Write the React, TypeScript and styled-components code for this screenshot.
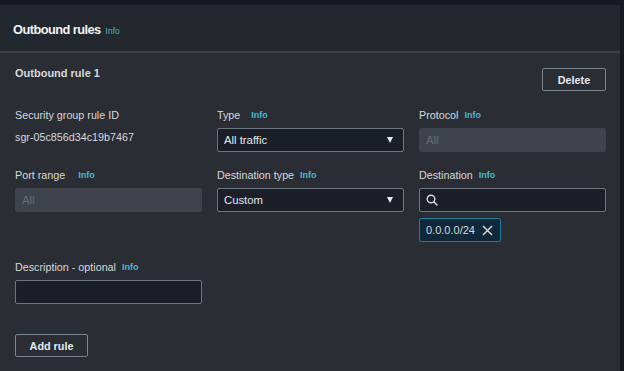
import { FC, ReactNode } from 'react'
import styled, { createGlobalStyle } from 'styled-components'

/*
 * Colours
 */

const Colors = {
    PAGE: '#161921',
    HEADER: '#23272e',
    BODY: '#2a2d33',
    SEPARATOR: '#3d4148',
    TEXT: '#d6d9dc',
    INFO: '#44b9d6',
    INPUT: '#1a1f28',
    INPUT_BORDER: '#6e7780',
    DISABLED: '#3f444c',
    DISABLED_TEXT: '#676d75',
    BUTTON_BORDER: '#7a848f',
    TOKEN: '#10283a',
    TOKEN_BORDER: '#1f7d9e',
}

/*
 * Styles
 */

const GlobalStyle = createGlobalStyle`
    html, body {
        margin: 0;
        padding: 0;
        background: ${Colors.PAGE};
    }
    body {
        font-family: "Liberation Sans", Arial, sans-serif;
        color: ${Colors.TEXT};
    }
`

const Page = styled.div`
    width: 624px;
    height: 371px;
    padding-top: 5px;
    box-sizing: border-box;
    display: flex;
    overflow: hidden;
`

const Panel = styled.div`
    width: 620px;
    display: flex;
    flex-direction: column;
    background: ${Colors.BODY};
`

const Header = styled.div`
    height: 46px;
    padding: 0 13px;
    display: flex;
    align-items: center;
    gap: 5px;
    background: ${Colors.HEADER};
    border-bottom: 2px solid ${Colors.SEPARATOR};
`

const Title = styled.h2`
    margin: 0;
    font-size: 12.8px;
    font-weight: 700;
    letter-spacing: -0.55px;
    color: #f2f3f3;
    padding-top: 2px;
`

const HeaderInfo = styled.span`
    font-size: 8.5px;
    color: ${Colors.INFO};
    padding-top: 5px;
`

const Body = styled.div`
    padding: 12px 14px 0 15px;
    display: flex;
    flex-direction: column;
`

const RuleHeader = styled.div`
    display: flex;
    justify-content: space-between;
    align-items: flex-start;
    margin-bottom: 17px;
`

const RuleTitle = styled.h3`
    margin: 0;
    font-size: 11px;
    font-weight: 700;
    line-height: 16px;
`

const Button = styled.button<{ $width: number; $top?: number }>`
    width: ${(p) => p.$width}px;
    height: 23px;
    margin-top: ${(p) => p.$top ?? 0}px;
    padding: 0;
    background: transparent;
    border: 1px solid ${Colors.BUTTON_BORDER};
    border-radius: 2px;
    color: #e6e9ec;
    font-family: "Liberation Sans", Arial, sans-serif;
    font-size: 10.8px;
    font-weight: 700;
`

const Grid = styled.div`
    display: grid;
    grid-template-columns: repeat(3, 187px);
    column-gap: 15px;
    row-gap: 16px;
    align-items: start;
`

const Field = styled.div`
    display: flex;
    flex-direction: column;
`

const LabelRow = styled.div<{ $gap: number }>`
    height: 14px;
    display: flex;
    align-items: center;
    gap: ${(p) => p.$gap}px;
    margin-bottom: 6px;
`

const Label = styled.span`
    font-size: 10.75px;
`

const Info = styled.span`
    font-size: 9px;
    font-weight: 700;
    color: ${Colors.INFO};
`

const Value = styled.div`
    font-size: 10.75px;
    line-height: 14px;
    margin-top: 2px;
`

const Box = styled.div<{ $disabled?: boolean }>`
    height: 24px;
    box-sizing: border-box;
    padding: 0 6px;
    display: flex;
    align-items: center;
    gap: 6px;
    font-size: 11.3px;
    border-radius: 2px;
    background: ${(p) => (p.$disabled ? Colors.DISABLED : Colors.INPUT)};
    border: 1px solid ${(p) => (p.$disabled ? Colors.DISABLED : Colors.INPUT_BORDER)};
    color: ${(p) => (p.$disabled ? Colors.DISABLED_TEXT : '#e3e6e8')};
`

const BoxText = styled.span`
    flex: 1;
`

const Caret = styled.span`
    width: 0;
    height: 0;
    margin-right: 4px;
    border-left: 3.5px solid transparent;
    border-right: 3.5px solid transparent;
    border-top: 6px solid #e8eaec;
`

const Token = styled.div`
    margin: 6px 0 2px;
    align-self: flex-start;
    height: 24px;
    box-sizing: border-box;
    padding: 0 7px 0 6px;
    display: flex;
    align-items: center;
    gap: 7px;
    font-size: 11px;
    background: ${Colors.TOKEN};
    border: 1px solid ${Colors.TOKEN_BORDER};
    border-radius: 2px;
`

/*
 * Parts
 */

type FieldLabelProps = {
    text: string
    gap?: number
}

const FieldLabel: FC<FieldLabelProps> = ({ text, gap = 6 }) => (
    <LabelRow $gap={gap}>
        <Label>{text}</Label>
        <Info>Info</Info>
    </LabelRow>
)

const SelectBox: FC<{ value: string }> = ({ value }) => (
    <Box>
        <BoxText>{value}</BoxText>
        <Caret />
    </Box>
)

const SearchIcon = () => (
    <svg width="12" height="12" viewBox="0 0 12 12" fill="none">
        <circle cx="5" cy="5" r="3.8" stroke="#d6d9dc" strokeWidth="1.4" />
        <path d="M7.8 7.8L11 11" stroke="#d6d9dc" strokeWidth="1.5" strokeLinecap="round" />
    </svg>
)

const CloseIcon = () => (
    <svg width="11" height="11" viewBox="0 0 11 11" fill="none">
        <path d="M1 1L10 10M10 1L1 10" stroke="#d6d9dc" strokeWidth="1.5" />
    </svg>
)

type FieldProps = { children: ReactNode }
const Column: FC<FieldProps> = ({ children }) => <Field>{children}</Field>

/*
 * App
 */

const App: FC = () => {
    return (
        <>
            <GlobalStyle />
            <Page>
                <Panel>
                    <Header>
                        <Title>Outbound rules</Title>
                        <HeaderInfo>Info</HeaderInfo>
                    </Header>
                    <Body>
                        <RuleHeader>
                            <RuleTitle>Outbound rule 1</RuleTitle>
                            <Button $width={64} $top={3}>
                                Delete
                            </Button>
                        </RuleHeader>
                        <Grid>
                            <Field>
                                <LabelRow $gap={6}>
                                    <Label>Security group rule ID</Label>
                                </LabelRow>
                                <Value>sgr-05c856d34c19b7467</Value>
                            </Field>
                            <Column>
                                <FieldLabel text="Type" gap={11} />
                                <SelectBox value="All traffic" />
                            </Column>
                            <Column>
                                <FieldLabel text="Protocol" />
                                <Box $disabled>All</Box>
                            </Column>

                            <Column>
                                <FieldLabel text="Port range" gap={13} />
                                <Box $disabled>All</Box>
                            </Column>
                            <Column>
                                <FieldLabel text="Destination type" />
                                <SelectBox value="Custom" />
                            </Column>
                            <Column>
                                <FieldLabel text="Destination" />
                                <Box>
                                    <SearchIcon />
                                </Box>
                                <Token>
                                    0.0.0.0/24
                                    <CloseIcon />
                                </Token>
                            </Column>

                            <Column>
                                <FieldLabel text="Description - optional" />
                                <Box />
                            </Column>
                        </Grid>
                        <Button $width={73} $top={30}>
                            Add rule
                        </Button>
                    </Body>
                </Panel>
            </Page>
        </>
    )
}

export default App
